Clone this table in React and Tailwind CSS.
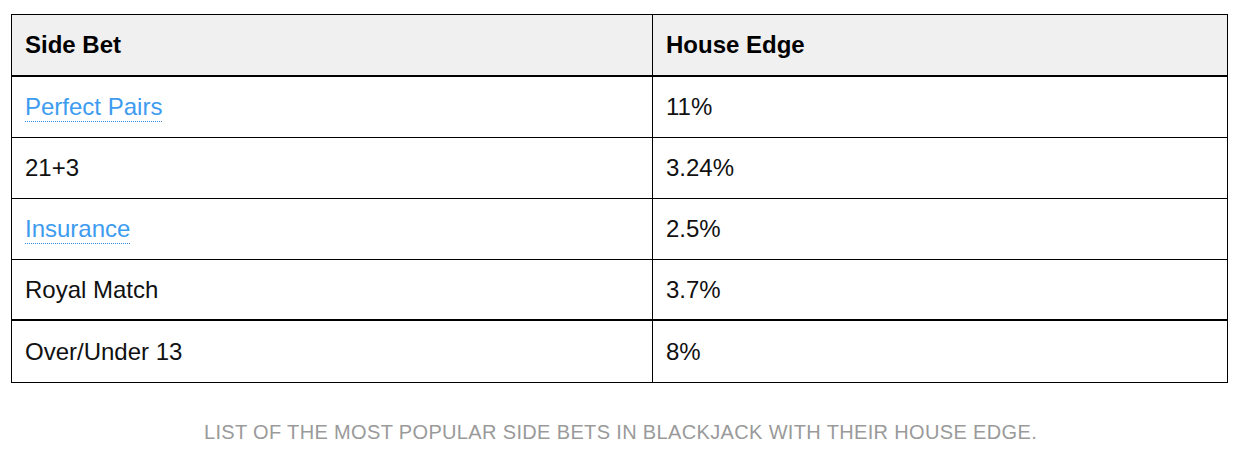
export default function App() {
  const rows = [
    { bet: "Perfect Pairs", edge: "11%", link: true, thick: false },
    { bet: "21+3", edge: "3.24%", link: false, thick: false },
    { bet: "Insurance", edge: "2.5%", link: true, thick: false },
    { bet: "Royal Match", edge: "3.7%", link: false, thick: true },
    { bet: "Over/Under 13", edge: "8%", link: false, thick: false },
  ];
  return (
    <div className="w-[1241px] h-[463px] bg-white pt-[14px] px-[11px]" style={{ fontFamily: '"Liberation Sans", Arial, sans-serif' }}>
      <div className="w-[1217px] border border-black">
        <div className="flex h-[62px] bg-[#f0f0f0] border-b-2 border-black">
          <div className="w-[641px] border-r border-black flex items-center pl-[13px] text-[24px] font-bold text-black">Side Bet</div>
          <div className="flex-1 flex items-center pl-[13px] text-[24px] font-bold text-black">House Edge</div>
        </div>
        {rows.map((r, i) => (
          <div
            key={i}
            className={
              "flex h-[61px] " +
              (i === rows.length - 1 ? "" : r.thick ? "border-b-2 border-black" : "border-b border-black")
            }
          >
            <div className="w-[641px] border-r border-black flex items-center pl-[13px] text-[24px]">
              {r.link ? (
                <span className="text-[#3d9cf0] border-b border-dotted border-[#2f8fe8] leading-[28px]">{r.bet}</span>
              ) : (
                <span className="text-[#111]">{r.bet}</span>
              )}
            </div>
            <div className="flex-1 flex items-center pl-[13px] text-[24px] text-[#111]">{r.edge}</div>
          </div>
        ))}
      </div>
      <div className="mt-[37px] text-center text-[20px] leading-[24px] text-[#9a9a9a] tracking-[0.35px] uppercase">
        List of the most popular side bets in blackjack with their house edge.
      </div>
    </div>
  );
}
